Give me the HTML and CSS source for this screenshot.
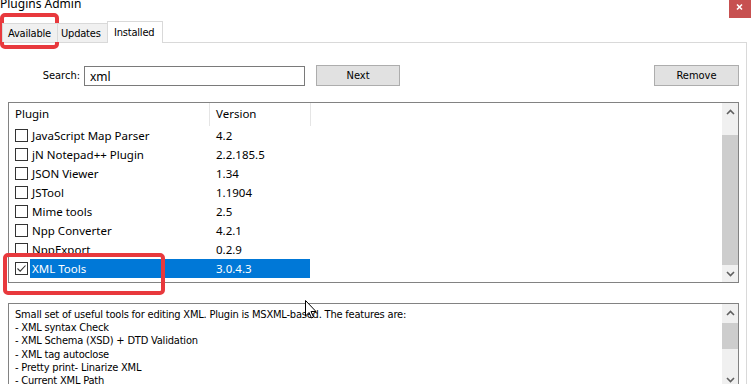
FILE: index.html
```html
<!DOCTYPE html>
<html lang="en">
<head>
  <meta charset="UTF-8">
  <title>Plugins Admin</title>
  <link rel="stylesheet" href="styles.css">
</head>
<body>
  <div class="titlebar">
    <div class="title">Plugins Admin</div>
    <svg class="win-close" width="22" height="18" viewBox="0 0 22 18">
      <rect x="0" y="0" width="22" height="18" fill="#c75050"/>
      <path d="M8 4.5 L13 9.5 M13 4.5 L8 9.5" stroke="#fff" stroke-width="1.6" fill="none"/>
    </svg>
  </div>

  <div class="tabs">
    <div class="tab tab-available">Available</div>
    <div class="tab tab-updates">Updates</div>
    <div class="tab active">Installed</div>
  </div>

  <div class="panel">
    <div class="search-row">
      <label class="search-label" for="search">Search:</label>
      <input id="search" class="search-input" type="text" value="xml">
      <button class="btn btn-next">Next</button>
      <button class="btn btn-remove">Remove</button>
    </div>

    <div class="list">
      <div class="list-main">
        <div class="list-head">
          <div class="head-name">Plugin</div>
          <div class="head-ver">Version</div>
        </div>
        <div class="row"><span class="check"></span><div class="cells"><span class="name">JavaScript Map Parser</span><span class="ver">4.2</span></div></div>
        <div class="row"><span class="check"></span><div class="cells"><span class="name">jN Notepad++ Plugin</span><span class="ver">2.2.185.5</span></div></div>
        <div class="row"><span class="check"></span><div class="cells"><span class="name">JSON Viewer</span><span class="ver">1.34</span></div></div>
        <div class="row"><span class="check"></span><div class="cells"><span class="name">JSTool</span><span class="ver">1.1904</span></div></div>
        <div class="row"><span class="check"></span><div class="cells"><span class="name">Mime tools</span><span class="ver">2.5</span></div></div>
        <div class="row"><span class="check"></span><div class="cells"><span class="name">Npp Converter</span><span class="ver">4.2.1</span></div></div>
        <div class="row"><span class="check"></span><div class="cells"><span class="name">NppExport</span><span class="ver">0.2.9</span></div></div>
        <div class="row">
          <span class="check">
            <svg width="11" height="11" viewBox="0 0 11 11"><path d="M1.5 5.5 L4.2 8.2 L9.5 2.5" fill="none" stroke="#333" stroke-width="1.1"/></svg>
          </span>
          <div class="cells selected"><span class="name">XML Tools</span><span class="ver">3.0.4.3</span></div>
        </div>
      </div>
      <div class="vscroll">
        <div class="sb-btn"><svg width="9" height="6" viewBox="0 0 9 6"><path d="M1 5 L4.5 1.5 L8 5" fill="none" stroke="#606060" stroke-width="1.6"/></svg></div>
        <div class="sb-track"><div class="thumb thumb-list"></div></div>
        <div class="sb-btn"><svg width="9" height="6" viewBox="0 0 9 6"><path d="M1 1 L4.5 4.5 L8 1" fill="none" stroke="#606060" stroke-width="1.6"/></svg></div>
      </div>
    </div>

    <div class="desc">
      <div class="desc-text">
        <div>Small set of useful tools for editing XML. Plugin is MSXML-based. The features are:</div>
        <div>- XML syntax Check</div>
        <div>- XML Schema (XSD) + DTD Validation</div>
        <div>- XML tag autoclose</div>
        <div>- Pretty print- Linarize XML</div>
        <div>- Current XML Path</div>
      </div>
      <div class="vscroll">
        <div class="sb-btn"><svg width="9" height="6" viewBox="0 0 9 6"><path d="M1 5 L4.5 1.5 L8 5" fill="none" stroke="#606060" stroke-width="1.6"/></svg></div>
        <div class="sb-track"><div class="thumb thumb-desc"></div></div>
        <div class="sb-btn"><svg width="9" height="6" viewBox="0 0 9 6"><path d="M1 1 L4.5 4.5 L8 1" fill="none" stroke="#606060" stroke-width="1.6"/></svg></div>
      </div>
    </div>
  </div>

  <!-- annotation boxes drawn over the dialog -->
  <div class="mark mark-tab"></div>
  <div class="mark mark-row"></div>

  <svg class="cursor" width="12" height="19" viewBox="0 0 12 19">
    <path d="M0.5 0.5 L0.5 16 L4 12.5 L6.5 18 L8.5 17 L6 11.5 L11 11.5 Z" fill="#fff" stroke="#000" stroke-width="1"/>
  </svg>
</body>
</html>
```

FILE: styles.css
```css
body {
  margin: 0;
  width: 751px;
  height: 384px;
  overflow: hidden;
  position: relative;
  background: #fff;
  color: #000;
  font-family: "DejaVu Sans Condensed", "Liberation Sans", sans-serif;
  font-size: 11px;
}
.titlebar {
  display: flex;
  justify-content: space-between;
  align-items: flex-start;
  height: 21px;
}
.title {
  font-family: "Noto Sans", sans-serif;
  font-size: 12px;
  line-height: 16px;
  margin-top: -4px;
}
.win-close {
  flex: none;
  display: block;
}
.tabs {
  display: flex;
  align-items: flex-end;
  height: 21px;
  padding-left: 2px;
  position: relative;
  z-index: 1;
}
.tab {
  box-sizing: border-box;
  height: 19px;
  border: 1px solid #d9d9d9;
  border-bottom: none;
  background: #f0f0f0;
  padding: 2px 0 0 5px;
  line-height: 15px;
  letter-spacing: -0.2px;
}
.tab-available {
  width: 56px;
}
.tab-updates {
  width: 51px;
  margin-left: -1px;
  padding-left: 3px;
}
.tab.active {
  width: 56px;
  margin-left: -1px;
  height: 22px;
  margin-bottom: -1px;
  background: #fff;
  padding: 3px 0 0 6px;
}
.panel {
  box-sizing: border-box;
  width: 747px;
  height: 400px;
  border-top: 1px solid #d9d9d9;
  border-right: 1px solid #d9d9d9;
  padding-top: 22px;
}
.search-row {
  display: flex;
  align-items: flex-start;
  height: 21px;
  padding-right: 7px;
}
.search-label {
  width: 80px;
  text-align: right;
  line-height: 21px;
}
.search-input {
  box-sizing: border-box;
  width: 221px;
  height: 20px;
  margin: 1px 0 0 4px;
  border: 1px solid #7a7a7a;
  padding: 0 0 0 5px;
  font-family: "Noto Sans", sans-serif;
  font-size: 12px;
  outline: none;
}
.btn {
  box-sizing: border-box;
  width: 84px;
  height: 21px;
  border: 1px solid #adadad;
  background: #e1e1e1;
  font-family: inherit;
  font-size: 11px;
  color: #000;
  padding: 0;
}
.btn-next {
  margin-left: 11px;
}
.btn-remove {
  width: 85px;
  margin-left: auto;
}
.list {
  box-sizing: border-box;
  display: flex;
  width: 731px;
  height: 181px;
  margin: 16px 0 0 8px;
  border: 1px solid #828282;
}
.list-main {
  flex: 1;
  font-family: "Noto Sans", sans-serif;
  font-size: 11.5px;
}
.list-head {
  display: flex;
  height: 23px;
  line-height: 22px;
}
.head-name {
  box-sizing: border-box;
  width: 201px;
  padding-left: 6px;
  border-right: 1px solid #e5e5e5;
}
.head-ver {
  box-sizing: border-box;
  width: 101px;
  padding-left: 6px;
  border-right: 1px solid #e5e5e5;
}
.row {
  display: flex;
  align-items: center;
  height: 19px;
}
.check {
  box-sizing: border-box;
  width: 13px;
  height: 13px;
  margin-left: 6px;
  border: 1px solid #333;
  background: #fff;
  display: flex;
}
.cells {
  display: flex;
  width: 280px;
  height: 19px;
  line-height: 19px;
  margin-left: 2px;
}
.cells.selected {
  background: #0078d7;
  color: #fff;
}
.name {
  box-sizing: border-box;
  width: 179px;
  padding-left: 2px;
}
.ver {
  padding-left: 7px;
}
.vscroll {
  width: 16px;
  display: flex;
  flex-direction: column;
  background: #f0f0f0;
}
.sb-btn {
  height: 17px;
  display: flex;
  align-items: center;
  justify-content: center;
}
.sb-track {
  flex: 1;
}
.thumb {
  background: #cdcdcd;
}
.thumb-list {
  margin-top: 15px;
  height: 130px;
}
.thumb-desc {
  margin-top: 2px;
  height: 26px;
}
.desc {
  box-sizing: border-box;
  display: flex;
  width: 731px;
  height: 86px;
  margin: 20px 0 0 8px;
  border: 1px solid #828282;
}
.desc-text {
  flex: 1;
  padding: 4px 6px 0;
  line-height: 13.2px;
  letter-spacing: -0.2px;
  overflow: hidden;
  white-space: nowrap;
}
.mark {
  position: absolute;
  box-sizing: border-box;
  border: 4px solid #e8393d;
  border-radius: 5px;
}
.mark-tab {
  left: 0;
  top: 13px;
  width: 59px;
  height: 36px;
}
.mark-row {
  left: 3px;
  top: 253px;
  width: 162px;
  height: 42px;
}
.cursor {
  position: absolute;
  left: 305px;
  top: 300px;
}
```
